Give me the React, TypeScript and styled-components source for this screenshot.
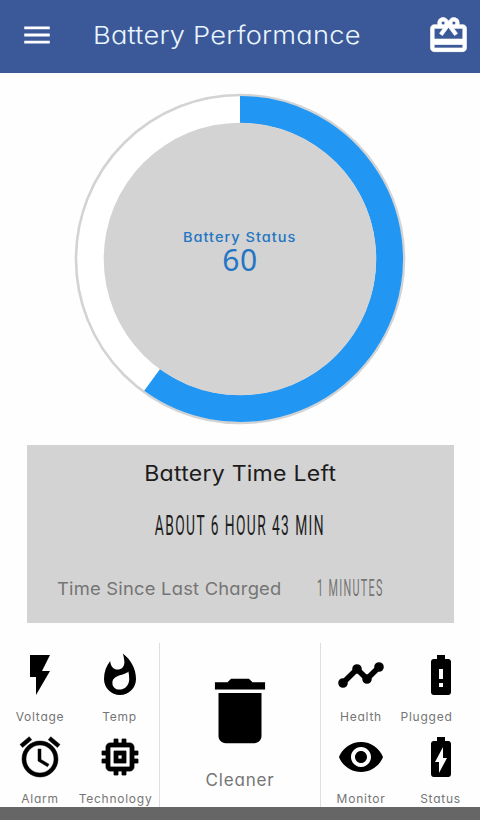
import React from "react";
import styled, { createGlobalStyle } from "styled-components";
import {
  MdAlarm,
  MdBatteryAlert,
  MdBatteryChargingFull,
  MdDelete,
  MdFlashOn,
  MdMemory,
  MdMenu,
  MdRedeem,
  MdRemoveRedEye,
  MdTimeline,
} from "react-icons/md";

const GlobalStyle = createGlobalStyle`
  * { box-sizing: border-box; }
  body { margin: 0; background: #fefefe; }
`;

const Screen = styled.div`
  width: 480px;
  height: 820px;
  display: flex;
  flex-direction: column;
  overflow: hidden;
  background: #fefefe;
  font-family: Inter, "Noto Sans", sans-serif;
  font-feature-settings: "cv11" 1;
`;

const Header = styled.header`
  height: 73px;
  flex: none;
  display: flex;
  align-items: center;
  padding: 0 10px 3px 20px;
  background: #3b5998;
  color: #fff;
`;

const Title = styled.h1`
  flex: 1;
  margin: 0 0 0 39px;
  font-size: 24.5px;
  line-height: 34px;
  font-weight: 300;
  letter-spacing: 0.2px;
  color: #e9f5ff;
  white-space: nowrap;
  transform: scaleX(1.112);
  transform-origin: left center;
`;

const RedeemIcon = styled(MdRedeem)`
  stroke-width: 0;
  & path:not([fill="none"]) {
    stroke: currentColor;
    stroke-width: 0.4px;
  }
`;

const GaugeArea = styled.section`
  height: 372px;
  flex: none;
  display: grid;
  justify-items: center;
  padding-top: 20px;
`;

const GaugeDrawing = styled.svg`
  grid-area: 1 / 1;
  width: 332px;
  height: 332px;
`;

const GaugeText = styled.div`
  grid-area: 1 / 1;
  display: flex;
  flex-direction: column;
  align-items: center;
  padding-top: 135px;
  color: #2476c4;
`;

const GaugeLabel = styled.span`
  font-size: 13px;
  line-height: 18px;
  font-weight: 450;
  letter-spacing: 0.9px;
  white-space: nowrap;
  transform: scaleX(1.12);
`;

const GaugeValue = styled.span`
  font-family: "Noto Sans", sans-serif;
  font-size: 30px;
  line-height: 27px;
  letter-spacing: 0.5px;
`;

const TimePanel = styled.section`
  width: 427px;
  height: 178px;
  flex: none;
  align-self: center;
  display: flex;
  flex-direction: column;
  align-items: center;
  padding-top: 14px;
  background: #d3d3d3;
`;

const PanelTitle = styled.h2`
  margin: 0;
  font-size: 21px;
  line-height: 30px;
  font-weight: 400;
  letter-spacing: 0.2px;
  color: #1c1c1c;
  white-space: nowrap;
  transform: scaleX(1.1);
`;

const NarrowText = styled.span<{ $size: number; $squeeze: number; $color: string }>`
  font-family: Roboto, sans-serif;
  font-weight: 400;
  font-size: ${(p) => p.$size}px;
  line-height: 30px;
  letter-spacing: 2.8px;
  color: ${(p) => p.$color};
  transform: scaleX(${(p) => p.$squeeze});
  white-space: nowrap;
`;

const Remaining = styled.div`
  display: flex;
  justify-content: center;
  margin-top: 22px;
`;

const ChargedRow = styled.div`
  align-self: stretch;
  display: grid;
  grid-template-columns: 260px 1fr;
  align-items: center;
  margin-top: 33px;
  padding-left: 30px;
`;

const ChargedLabel = styled.span`
  font-size: 17.5px;
  line-height: 30px;
  letter-spacing: 0.2px;
  color: #757575;
  white-space: nowrap;
  transform: scaleX(1.05);
  transform-origin: left center;
`;

const ChargedValue = styled.div`
  display: flex;
  & > span { transform-origin: left center; }
`;

const Menu = styled.nav`
  flex: 1;
  min-height: 0;
  display: grid;
  grid-template-columns: 160px 161px 159px;
  grid-template-rows: 164px;
  margin-top: 20px;
`;

const MenuGroup = styled.div<{ $divided?: boolean }>`
  display: grid;
  grid-template-columns: 80px 79px;
  grid-template-rows: 82px 82px;
  padding-top: 8px;
  border-right: ${(p) => (p.$divided ? "1.5px solid #dedede" : "none")};
`;

const MenuItem = styled.div<{ $shift?: number; $stroke?: number }>`
  display: flex;
  flex-direction: column;
  align-items: center;
  color: #000;
  & > svg {
    flex: none;
    stroke-width: 0;
  }
  & > svg path:not([fill="none"]) {
    stroke: currentColor;
    stroke-width: ${(p) => p.$stroke ?? 0}px;
  }
  & > span { margin-left: ${(p) => p.$shift ?? 0}px; }
`;

const MenuLabel = styled.span`
  margin-top: 10px;
  font-size: 12px;
  line-height: 16px;
  letter-spacing: 0.75px;
  color: #757575;
  white-space: nowrap;
`;

const CleanerItem = styled.div`
  display: flex;
  flex-direction: column;
  align-items: center;
  padding-top: 25px;
  border-right: 1.5px solid #dedede;
  color: #000;
`;

const CleanerLabel = styled.span`
  margin-top: 14px;
  font-size: 17px;
  line-height: 24px;
  letter-spacing: 0.8px;
  color: #757575;
`;

const BottomBar = styled.footer`
  position: relative;
  height: 13px;
  flex: none;
  background: #666;
`;

function FlameIcon() {
  return (
    <svg width="48" height="48" viewBox="0 0 24 24" fill="currentColor" fillRule="evenodd">
      <path d="M13.4 1.2s.8 2.3.8 4.4c0 2.1-1.4 3.7-3.4 3.7S7.2 7.6 7.1 5C5.1 7.5 4 10.6 4 14c0 4.42 3.58 8 8 8s8-3.58 8-8c0-5.2-2.6-9.8-6.6-12.8zM16.2 10.3C14.6 12.3 8.2 11.8 8.2 16c0 2 1.5 3.3 3.4 3.3 3 0 5-2.3 5-5.2 0-1.3-.1-2.6-.4-3.8z" />
    </svg>
  );
}

export default function App() {
  return (
    <Screen>
      <GlobalStyle />
      <Header>
        <MdMenu size={34} />
        <Title>Battery Performance</Title>
        <RedeemIcon size={43} />
      </Header>

      <GaugeArea>
        <GaugeDrawing viewBox="-166 -166 332 332">
          <circle r="164" fill="#fff" stroke="#d3d3d3" strokeWidth="2.6" />
          <path d="M0 -149.5A149.5 149.5 0 1 1 -87.87 120.95" fill="none" stroke="#2196f3" strokeWidth="27" />
          <circle r="136.3" fill="#d3d3d3" />
        </GaugeDrawing>
        <GaugeText>
          <GaugeLabel>Battery Status</GaugeLabel>
          <GaugeValue>60</GaugeValue>
        </GaugeText>
      </GaugeArea>

      <TimePanel>
        <PanelTitle>Battery Time Left</PanelTitle>
        <Remaining>
          <NarrowText $size={27} $squeeze={0.51} $color="#1c1c1c">ABOUT 6 HOUR 43 MIN</NarrowText>
        </Remaining>
        <ChargedRow>
          <ChargedLabel>Time Since Last Charged</ChargedLabel>
          <ChargedValue>
            <NarrowText $size={23} $squeeze={0.47} $color="#757575">1 MINUTES</NarrowText>
          </ChargedValue>
        </ChargedRow>
      </TimePanel>

      <Menu>
        <MenuGroup $divided>
          <MenuItem><MdFlashOn size={48} /><MenuLabel>Voltage</MenuLabel></MenuItem>
          <MenuItem><FlameIcon /><MenuLabel>Temp</MenuLabel></MenuItem>
          <MenuItem $stroke={0.25}><MdAlarm size={48} /><MenuLabel>Alarm</MenuLabel></MenuItem>
          <MenuItem $shift={-8} $stroke={0.4}><MdMemory size={48} /><MenuLabel>Technology</MenuLabel></MenuItem>
        </MenuGroup>
        <CleanerItem>
          <MdDelete size={86} />
          <CleanerLabel>Cleaner</CleanerLabel>
        </CleanerItem>
        <MenuGroup>
          <MenuItem $stroke={0.8}><MdTimeline size={48} /><MenuLabel>Health</MenuLabel></MenuItem>
          <MenuItem $shift={-28}><MdBatteryAlert size={48} /><MenuLabel>Plugged</MenuLabel></MenuItem>
          <MenuItem><MdRemoveRedEye size={48} /><MenuLabel>Monitor</MenuLabel></MenuItem>
          <MenuItem><MdBatteryChargingFull size={48} /><MenuLabel>Status</MenuLabel></MenuItem>
        </MenuGroup>
      </Menu>
      <BottomBar />
    </Screen>
  );
}
